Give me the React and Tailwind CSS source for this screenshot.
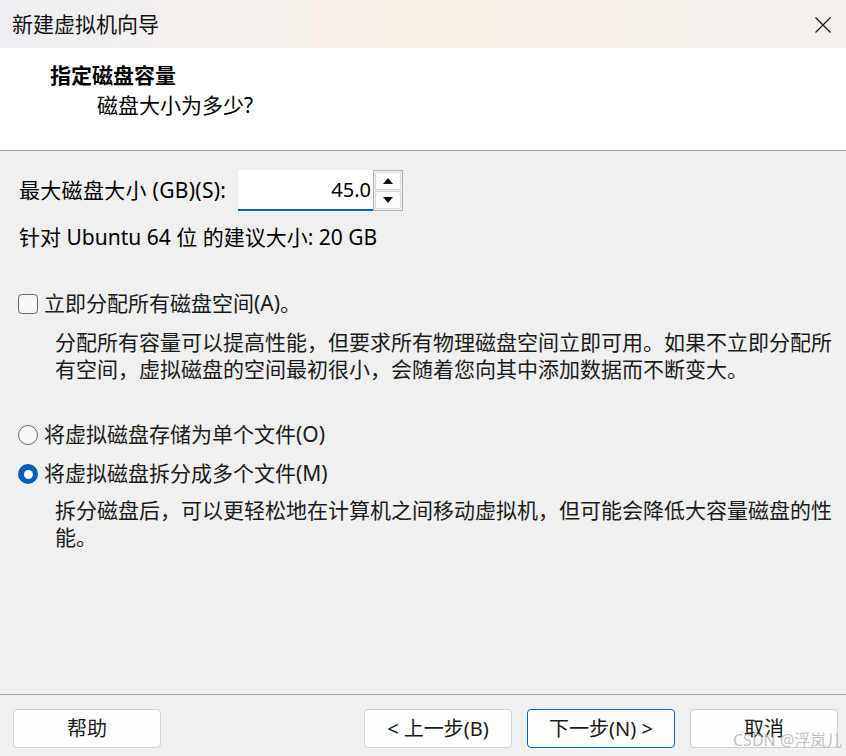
import React from "react";

const font = { fontFamily: '"Noto Sans", "Noto Sans CJK SC", sans-serif' };

function Btn({ children, primary }) {
  return (
    <div
      className={`w-[148px] h-[39px] flex items-center justify-center rounded-[4px] bg-[#fdfdfd] text-[20px] text-[#1a1a1a] border ${
        primary ? "border-[#0067c0]" : "border-[#d0d0d0]"
      }`}
    >
      {children}
    </div>
  );
}

export default function App() {
  return (
    <div
      className="w-[846px] h-[756px] relative overflow-hidden bg-[#f0f0f0] text-[#1a1a1a] flex flex-col"
      style={font}
    >
      {/* Title bar */}
      <div className="h-[48px] shrink-0 flex items-center justify-between pl-[12px] pr-[15px] bg-gradient-to-r from-[#eeeef2] via-[#f8f0e6] to-[#f3efed]">
        <span className="text-[21px] leading-none text-[#111]">新建虚拟机向导</span>
        <svg width="16" height="16" viewBox="0 0 16 16" className="mt-[1px]">
          <path d="M0.5 0.5 L15.5 15.5 M15.5 0.5 L0.5 15.5" stroke="#111" strokeWidth="1.2" fill="none" />
        </svg>
      </div>

      {/* Header */}
      <div className="h-[103px] shrink-0 bg-white border-b border-[#a0a0a0] pt-[12px]">
        <div className="pl-[50px] text-[21px] leading-[30px] font-bold text-black">指定磁盘容量</div>
        <div className="pl-[97px] text-[21px] leading-[30px] text-black">磁盘大小为多少?</div>
      </div>

      {/* Body */}
      <div className="h-[543px] shrink-0 bg-[#f0f0f0] pt-[19px] text-[21px]">
        <div className="flex items-center pl-[19px] h-[41px]">
          <span className="w-[219px] shrink-0 whitespace-nowrap text-black tracking-[0.3px]">最大磁盘大小 (GB)(S):</span>
          <div className="w-[135px] h-[41px] bg-white border-b-2 border-[#0067c0] flex items-center justify-end pr-[2px]">
            <span className="text-[20px] text-black leading-none">45.0</span>
          </div>
          <div className="w-[30px] h-[41px] border border-[#b0b0b0] flex flex-col">
            <div className="flex-1 m-[1px] mb-0 border border-[#dadada] bg-[#fbfbfb] flex items-center justify-center">
              <svg width="10" height="6" viewBox="0 0 10 6">
                <path d="M5 0 L10 6 L0 6 Z" fill="#111" />
              </svg>
            </div>
            <div className="flex-1 m-[1px] border border-[#dadada] bg-[#fbfbfb] flex items-center justify-center">
              <svg width="10" height="6" viewBox="0 0 10 6">
                <path d="M0 0 L10 0 L5 6 Z" fill="#111" />
              </svg>
            </div>
          </div>
        </div>

        <div className="pl-[19px] mt-[12px] leading-[28px] whitespace-nowrap text-black">
          针对 Ubuntu 64 位 的建议大小: 20 GB
        </div>

        <div className="flex items-center pl-[18px] mt-[38px] h-[30px]">
          <div className="w-[20px] h-[20px] rounded-[4px] border border-[#6a6a6a] bg-[#f7f7f7] shrink-0" />
          <span className="ml-[6px] whitespace-nowrap">立即分配所有磁盘空间(A)。</span>
        </div>

        <div className="pl-[55px] mt-[10px] leading-[27px] whitespace-nowrap">
          <div>分配所有容量可以提高性能，但要求所有物理磁盘空间立即可用。如果不立即分配所</div>
          <div>有空间，虚拟磁盘的空间最初很小，会随着您向其中添加数据而不断变大。</div>
        </div>

        <div className="flex items-center pl-[18px] mt-[37px] h-[30px]">
          <div className="w-[20px] h-[20px] rounded-full border border-[#6a6a6a] bg-[#f7f7f7] shrink-0" />
          <span className="ml-[6px] whitespace-nowrap">将虚拟磁盘存储为单个文件(O)</span>
        </div>

        <div className="flex items-center pl-[18px] mt-[9px] h-[30px]">
          <div className="w-[20px] h-[20px] rounded-full bg-[#005fb8] flex items-center justify-center shrink-0">
            <div className="w-[9px] h-[9px] rounded-full bg-white" />
          </div>
          <span className="ml-[6px] whitespace-nowrap">将虚拟磁盘拆分成多个文件(M)</span>
        </div>

        <div className="pl-[55px] mt-[8px] leading-[27px] whitespace-nowrap">
          <div>拆分磁盘后，可以更轻松地在计算机之间移动虚拟机，但可能会降低大容量磁盘的性</div>
          <div>能。</div>
        </div>
      </div>

      {/* Footer */}
      <div className="flex-1 border-t border-[#a0a0a0] bg-[#f0f0f0] pt-[14px] pl-[13px] pr-[8px] flex items-start">
        <Btn>帮助</Btn>
        <div className="flex-1" />
        <Btn>&lt; 上一步(B)</Btn>
        <div className="w-[15px]" />
        <Btn primary>下一步(N) &gt;</Btn>
        <div className="w-[15px]" />
        <Btn>取消</Btn>
      </div>

      <div className="absolute left-[733px] top-[730px] text-[16px] leading-[20px] text-[#b8b8b8]/90 whitespace-nowrap pointer-events-none">
        CSDN @浮岚儿
      </div>
    </div>
  );
}
